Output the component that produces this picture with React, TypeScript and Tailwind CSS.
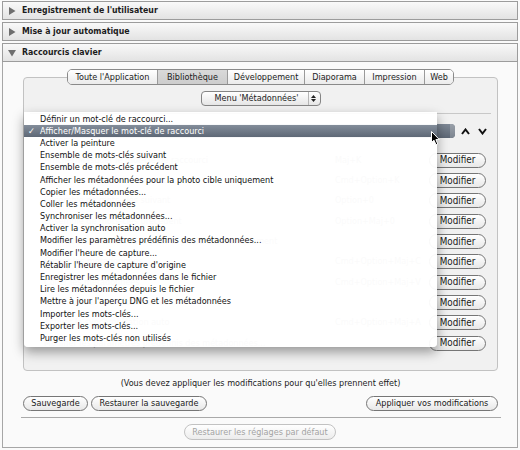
import React from "react";

const FONT = "font-['DejaVu_Sans_Condensed','DejaVu_Sans',sans-serif]";

function Tri({ down }: { down?: boolean }) {
  return (
    <svg width="8" height="8" viewBox="0 0 8 8" className="shrink-0">
      {down ? (
        <polygon points="0,1 8,1 4,7.5" fill="#6e6e6e" />
      ) : (
        <polygon points="1,0 7.5,4 1,8" fill="#6e6e6e" />
      )}
    </svg>
  );
}

function Header({ label, down }: { label: string; down?: boolean }) {
  return (
    <div className="h-[19px] border border-[#9c9c9c] bg-gradient-to-b from-[#f9f9f9] to-[#e3e3e3] flex items-center pl-[5px] gap-[6px]">
      <Tri down={down} />
      <span className="text-[8.7px] font-bold text-[#1c1c1c] leading-none">{label}</span>
    </div>
  );
}

const tabs: { label: string; w: string; sel?: boolean }[] = [
  { label: "Toute l'Application", w: "w-[89px]" },
  { label: "Bibliothèque", w: "w-[70px]", sel: true },
  { label: "Développement", w: "w-[77px]" },
  { label: "Diaporama", w: "w-[60px]" },
  { label: "Impression", w: "w-[60px]" },
  { label: "Web", w: "w-[29px]" },
];

const rows: { label: string; sc: string }[] = [
  { label: "Afficher/Masquer le mot-clé de raccourci", sc: "Maj+K" },
  { label: "Définir un mot-clé de raccourci...", sc: "Cmd+Option+K" },
  { label: "Ensemble de mots-clés suivant", sc: "Option+0" },
  { label: "Ensemble de mots-clés précédent", sc: "Option+Maj+0" },
  { label: "Afficher les métadonnées pour la photo cible uniquement", sc: "" },
  { label: "Copier les métadonnées...", sc: "Cmd+Option+Maj+C" },
  { label: "Coller les métadonnées", sc: "Cmd+Option+Maj+V" },
  { label: "Synchroniser les métadonnées...", sc: "" },
  { label: "Activer la synchronisation auto", sc: "Cmd+Option+Maj+A" },
  { label: "Modifier les paramètres prédéfinis des métadonnées...", sc: "" },
];

const menuItems = [
  "Définir un mot-clé de raccourci...",
  "Afficher/Masquer le mot-clé de raccourci",
  "Activer la peinture",
  "Ensemble de mots-clés suivant",
  "Ensemble de mots-clés précédent",
  "Afficher les métadonnées pour la photo cible uniquement",
  "Copier les métadonnées...",
  "Coller les métadonnées",
  "Synchroniser les métadonnées...",
  "Activer la synchronisation auto",
  "Modifier les paramètres prédéfinis des métadonnées...",
  "Modifier l'heure de capture...",
  "Rétablir l'heure de capture d'origine",
  "Enregistrer les métadonnées dans le fichier",
  "Lire les métadonnées depuis le fichier",
  "Mettre à jour l'aperçu DNG et les métadonnées",
  "Importer les mots-clés...",
  "Exporter les mots-clés...",
  "Purger les mots-clés non utilisés",
];

function PillButton({ label, w, disabled, size = "text-[9px]" }: { label: string; w: string; disabled?: boolean; size?: string }) {
  return (
    <div
      className={`${w} h-[15px] rounded-full border ${
        disabled ? "border-[#bdbdbd] text-[#a8a8a8]" : "border-[#767676] text-[#1a1a1a]"
      } bg-gradient-to-b from-[#ffffff] to-[#e8e8e8] flex items-center justify-center ${size} leading-none shrink-0`}
    >
      {label}
    </div>
  );
}

export default function App() {
  return (
    <div className={`relative w-[520px] h-[450px] bg-[#fafafa] px-[2px] pt-[1px] ${FONT} select-none`}>
      <div className="flex flex-col gap-[2px]">
        <Header label="Enregistrement de l'utilisateur" />
        <Header label="Mise à jour automatique" />
        <Header label="Raccourcis clavier" down />
      </div>

      <div className="h-[386px] border-x border-b border-[#a6a6a6] flex flex-col pt-[7px]">
        <div className="pl-[20px] pr-[19px] flex flex-col">
          {/* tabs */}
          <div className="relative z-10 flex justify-center">
            <div className="flex h-[16px] rounded-[5px] border border-[#8a8a8a] overflow-hidden">
              {tabs.map((t, i) => (
                <div
                  key={t.label}
                  className={`${t.w} ${i > 0 ? "border-l border-[#9a9a9a]" : ""} ${
                    t.sel ? "bg-gradient-to-b from-[#d9d9d9] to-[#cdcdcd]" : "bg-gradient-to-b from-[#ffffff] to-[#ebebeb]"
                  } flex items-center justify-center text-[9px] leading-none text-[#1c1c1c]`}
                >
                  {t.label}
                </div>
              ))}
            </div>
          </div>

          {/* panel */}
          <div className="-mt-[8px] h-[294px] rounded-[4px] border border-[#c2c2c2] bg-[#f1f1f1] flex flex-col pt-[13px]">
            <div className="mx-auto w-[120px] h-[15px] rounded-[4px] border border-[#858585] bg-gradient-to-b from-[#ffffff] to-[#e6e6e6] flex items-center">
              <span className="flex-1 text-center text-[9px] leading-none text-[#1c1c1c] pl-[4px]">Menu 'Métadonnées'</span>
              <div className="w-[11px] h-full border-l border-[#b5b5b5] flex flex-col items-center justify-center gap-[1px] mr-[1px]">
                <svg width="5" height="3" viewBox="0 0 5 3"><polygon points="0,3 5,3 2.5,0" fill="#222" /></svg>
                <svg width="5" height="3" viewBox="0 0 5 3"><polygon points="0,0 5,0 2.5,3" fill="#222" /></svg>
              </div>
            </div>

            <div className="mt-[7px] mx-[6px] border-t border-[#c8c8c8] flex flex-col">
              <div className="mt-[10px] h-[14px] flex items-center">
                <div className="ml-[10px] flex-1 h-[14px] rounded-[4px] bg-gradient-to-b from-[#7f8996] to-[#5d6775] flex justify-end">
                  <div className="w-[5px] h-full rounded-r-[4px] bg-gradient-to-b from-[#9aa1aa] to-[#7c848f]" />
                </div>
                <div className="w-[36px] flex items-center justify-center gap-[8px] pl-[2px]">
                  <svg width="9" height="7" viewBox="0 0 9 7">
                    <polyline points="1,6 4.5,1.5 8,6" fill="none" stroke="#111" strokeWidth="2" />
                  </svg>
                  <svg width="9" height="7" viewBox="0 0 9 7">
                    <polyline points="1,1 4.5,5.5 8,1" fill="none" stroke="#111" strokeWidth="2" />
                  </svg>
                </div>
              </div>
              <div className="mt-[12px] flex flex-col">
                {rows.map((r) => (
                  <div key={r.label} className="h-[20.35px] flex items-center text-[9px] leading-none">
                    <span className="flex-1 pl-[14px] text-[#a5a5a5] whitespace-nowrap">{r.label}</span>
                    <span className="w-[94px] text-[#9a9a9a] whitespace-nowrap">{r.sc}</span>
                    <div className="mr-[5px]">
                      <PillButton label="Modifier" w="w-[57px]" size="text-[9.8px]" />
                    </div>
                  </div>
                ))}
              </div>
            </div>
          </div>

          <div className="mt-[6px] h-[12px] text-center text-[9px] leading-[12px] text-[#1c1c1c]">
            (Vous devez appliquer les modifications pour qu'elles prennent effet)
          </div>

          <div className="mt-[7px] flex items-center gap-[3px]">
            <PillButton label="Sauvegarde" w="w-[65px]" />
            <PillButton label="Restaurer la sauvegarde" w="w-[116px]" />
            <div className="flex-1" />
            <PillButton label="Appliquer vos modifications" w="w-[132px]" />
          </div>
        </div>

        <div className="mt-[6px] ml-[18px] mr-[16px] border-t border-[#a9a9a9]" />

        <div className="mt-[6px] flex justify-center">
          <div className="w-[152px] h-[16px] rounded-full border border-[#c2c2c2] bg-gradient-to-b from-[#ffffff] to-[#ececec] flex items-center justify-center text-[9px] leading-none text-[#a3a3a3]">
            Restaurer les réglages par défaut
          </div>
        </div>
      </div>

      {/* popup menu */}
      <div className="absolute left-[24px] top-[112px] w-[413px] h-[235px] bg-[rgba(255,255,255,0.95)] rounded-b-[4px] shadow-[0_5px_12px_rgba(0,0,0,0.38)] pt-[1px] z-20">
        {menuItems.map((m, i) => {
          const sel = i === 1;
          return (
            <div
              key={m}
              className={`relative h-[12.2px] flex items-center pl-[16px] text-[9px] leading-none whitespace-nowrap ${
                sel ? "bg-gradient-to-b from-[#838d9a] to-[#5e6876] text-white" : "text-[#111]"
              }`}
            >
              {sel && <span className="absolute left-[4px] text-[9px]">✓</span>}
              {m}
            </div>
          );
        })}
      </div>

      {/* cursor */}
      <svg className="absolute left-[431px] top-[131px] z-30" width="10" height="15" viewBox="0 0 10 15">
        <path d="M0.5,0.5 L0.5,11.5 L3,9.2 L5,13.8 L6.8,13 L4.9,8.6 L8.4,8.6 Z" fill="#000" stroke="#fff" strokeWidth="1" />
      </svg>
    </div>
  );
}
